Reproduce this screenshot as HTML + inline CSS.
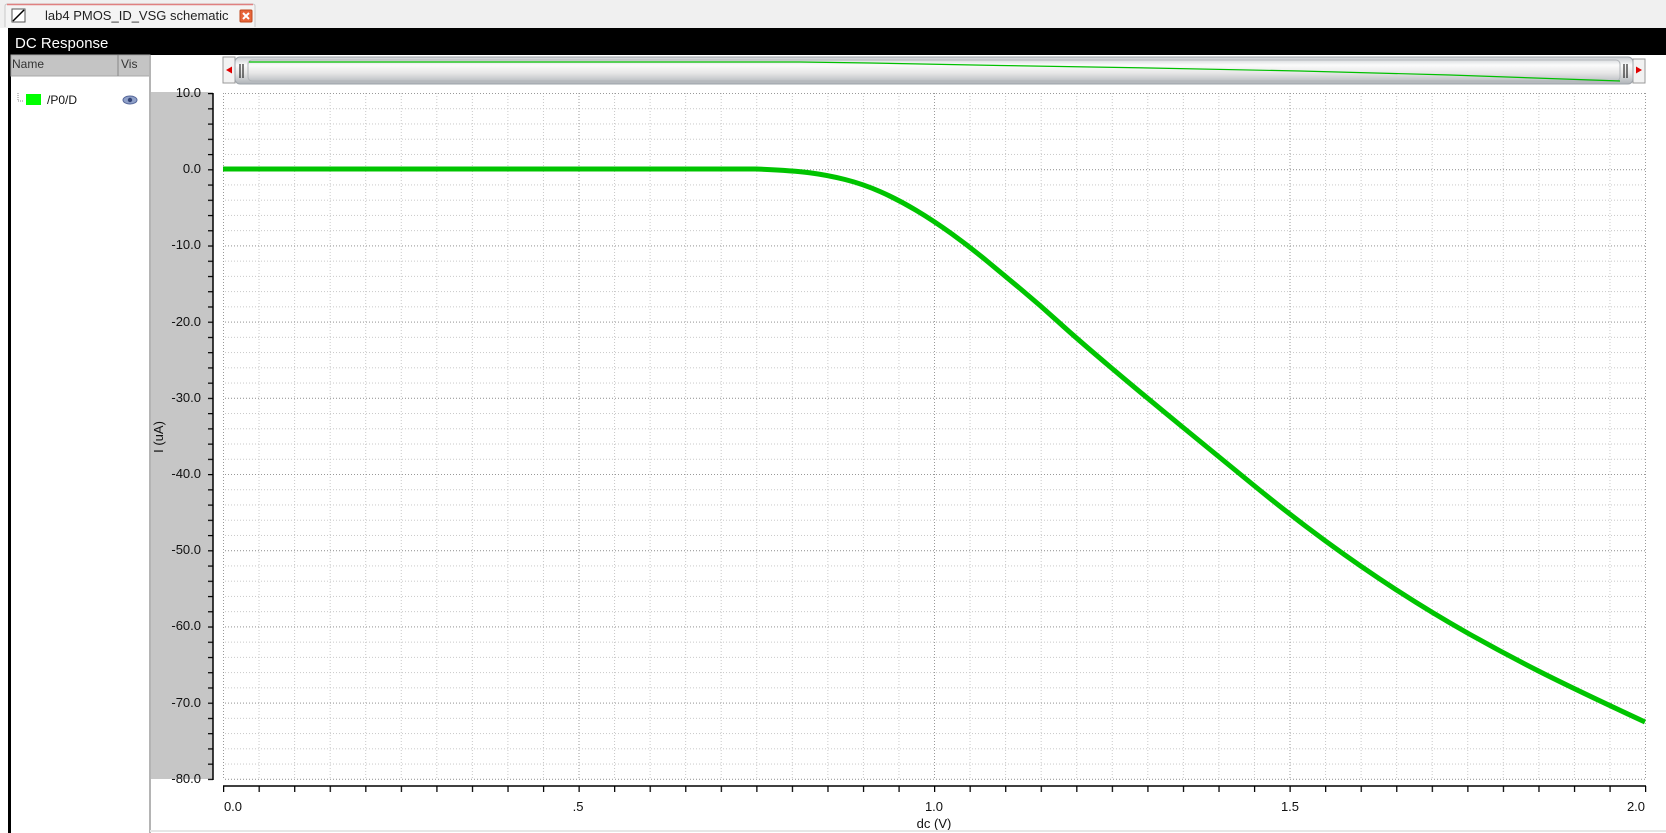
<!DOCTYPE html>
<html><head><meta charset="utf-8"><style>
html,body{margin:0;padding:0;background:#fff;width:1666px;height:833px;overflow:hidden}
svg{display:block;font-family:"Liberation Sans","DejaVu Sans",sans-serif}
</style></head><body>
<svg width="1666" height="833" viewBox="0 0 1666 833" xmlns="http://www.w3.org/2000/svg">
<defs>
<pattern id="gx" x="223" y="0" width="35.55" height="833" patternUnits="userSpaceOnUse">
<line x1="0.5" y1="0" x2="0.5" y2="833" stroke="#c8c8c8" stroke-dasharray="1 2"/></pattern>
<pattern id="gy" x="0" y="93" width="1666" height="15.24" patternUnits="userSpaceOnUse">
<line x1="0" y1="0.5" x2="1666" y2="0.5" stroke="#c8c8c8" stroke-dasharray="1 2"/></pattern>
<pattern id="gX" x="223" y="0" width="355.5" height="833" patternUnits="userSpaceOnUse">
<line x1="0.5" y1="0" x2="0.5" y2="833" stroke="#999" stroke-dasharray="1 2"/></pattern>
<pattern id="gY" x="0" y="93" width="1666" height="76.2" patternUnits="userSpaceOnUse">
<line x1="0" y1="0.5" x2="1666" y2="0.5" stroke="#999" stroke-dasharray="1 2"/></pattern>
<pattern id="tx" x="223" y="0" width="35.55" height="833" patternUnits="userSpaceOnUse">
<line x1="0.5" y1="0" x2="0.5" y2="833" stroke="#000" stroke-width="1.5"/></pattern>
<pattern id="ty" x="0" y="93" width="1666" height="15.24" patternUnits="userSpaceOnUse">
<line x1="0" y1="0.5" x2="1666" y2="0.5" stroke="#000" stroke-width="1.5"/></pattern>
<linearGradient id="thumb" x1="0" y1="0" x2="0" y2="1">
<stop offset="0" stop-color="#c8ccd0"/><stop offset="0.3" stop-color="#fbfbfb"/><stop offset="0.6" stop-color="#e6e6e6"/><stop offset="1" stop-color="#aeb3b8"/></linearGradient>
</defs>
<rect x="0" y="0" width="1666" height="28" fill="#f0f0f0"/>
<path d="M5 27 V6 Q5 4 8 4 H252 Q255 4 255 6 V27" fill="#f4f4f4" stroke="#c8c8c8"/>
<line x1="7" y1="4.5" x2="253" y2="4.5" stroke="#e08080" stroke-width="1.5"/>
<rect x="12" y="9" width="13" height="13" fill="#fff" stroke="#555"/>
<line x1="13" y1="21" x2="24" y2="10" stroke="#000" stroke-width="1.5"/>
<text x="45" y="20" font-size="13" fill="#222">lab4 PMOS_ID_VSG schematic</text>
<rect x="240" y="10" width="12" height="12" rx="1" fill="#e8653a" stroke="#c04a20"/>
<path d="M243 13 L249 19 M249 13 L243 19" stroke="#fff" stroke-width="2"/>
<rect x="8" y="28" width="1658" height="27" fill="#000"/>
<text x="15" y="48" font-size="15" fill="#fff">DC Response</text>
<rect x="8" y="55" width="142" height="778" fill="#fff"/>
<rect x="8" y="55" width="3" height="778" fill="#000"/>
<rect x="11" y="55" width="139" height="21" fill="#c4c4c4"/>
<rect x="11" y="55" width="139" height="21" fill="none" stroke="#a8a8a8"/>
<line x1="118" y1="55" x2="118" y2="76" stroke="#888"/>
<text x="12" y="68" font-size="12" fill="#333">Name</text>
<text x="121" y="68" font-size="12" fill="#333">Vis</text>
<path d="M18 93 V101 H23" stroke="#888" stroke-dasharray="1 1" fill="none"/>
<rect x="26" y="94" width="15" height="11" fill="#00ff00"/>
<text x="47" y="104" font-size="12" fill="#111">/P0/D</text>
<ellipse cx="130" cy="100" rx="7" ry="4" fill="#8fa0c8" stroke="#556699"/>
<circle cx="130" cy="100" r="2.2" fill="#334477"/>
<line x1="150" y1="55" x2="150" y2="833" stroke="#b4b4b4" stroke-width="2"/>
<rect x="151" y="92" width="62" height="687" fill="#c6c6c6"/>
<rect x="223" y="93" width="1423" height="687" fill="url(#gx)"/>
<rect x="223" y="93" width="1423" height="687" fill="url(#gy)"/>
<rect x="223" y="93" width="1423" height="687" fill="url(#gX)"/>
<rect x="223" y="93" width="1423" height="687" fill="url(#gY)"/>
<line x1="213" y1="93" x2="213" y2="780" stroke="#000" stroke-width="1.5"/>
<rect x="208" y="92" width="5" height="689" fill="url(#ty)"/>
<g font-size="13" fill="#111" text-anchor="end">
<text x="201" y="97">10.0</text><text x="201" y="173">0.0</text><text x="201" y="249">-10.0</text>
<text x="201" y="326">-20.0</text><text x="201" y="402">-30.0</text><text x="201" y="478">-40.0</text>
<text x="201" y="554">-50.0</text><text x="201" y="630">-60.0</text><text x="201" y="707">-70.0</text>
<text x="201" y="783">-80.0</text></g>
<text transform="translate(163,437) rotate(-90)" font-size="13" text-anchor="middle" fill="#111">I (uA)</text>
<line x1="223" y1="786" x2="1646" y2="786" stroke="#000" stroke-width="1.5"/>
<rect x="222" y="786" width="1425" height="6" fill="url(#tx)"/>
<g font-size="13" fill="#111" text-anchor="middle">
<text x="233" y="811">0.0</text><text x="578" y="811">.5</text><text x="934" y="811">1.0</text>
<text x="1290" y="811">1.5</text><text x="1636" y="811">2.0</text>
<text x="934" y="828">dc (V)</text></g>
<line x1="150" y1="831" x2="1666" y2="831" stroke="#e6e6e6" stroke-width="2"/>
<path fill="none" stroke="#00c400" stroke-width="5" stroke-linejoin="round"
d="M223,169 L756,169 Q792,170.5 809.5,172.75 Q827,175 845,179.5 Q863,184 880.5,191.75 Q898,199.5 916,210.25 Q934,221 952,234 Q970,247 987.5,261.5 Q1005,276 1023,291 Q1041,306 1058.5,322 Q1076,338 1111.5,368 Q1147,398 1182.5,427 Q1218,456 1254,485.5 Q1290,515 1325.5,541 Q1361,567 1396.5,590 Q1432,613 1467.5,633 Q1503,653 1538.5,671 Q1574,689 1645,722"/>
<rect x="223" y="57" width="12" height="26" fill="#f2f2f2" stroke="#999"/>
<path d="M226 70 L232 66.5 V73.5 Z" fill="#e00000"/>
<rect x="1633" y="59" width="12" height="24" fill="#f2f2f2" stroke="#999"/>
<path d="M1642 70 L1636 66.5 V73.5 Z" fill="#e00000"/>
<rect x="235" y="57" width="1398" height="27" rx="5" fill="url(#thumb)" stroke="#9ea4aa"/>
<rect x="248" y="60" width="1372" height="21" rx="4" fill="none" stroke="#b0b4b8"/>
<path d="M240 64 V78 M243 64 V78 M1624 64 V78 M1627 64 V78" stroke="#000" stroke-width="1"/>
<polyline fill="none" stroke="#00c000" stroke-width="1.2" points="249,62 800,62 870,63 1000,65.5 1150,68 1300,71 1450,75 1620,81"/>
</svg>
</body></html>
